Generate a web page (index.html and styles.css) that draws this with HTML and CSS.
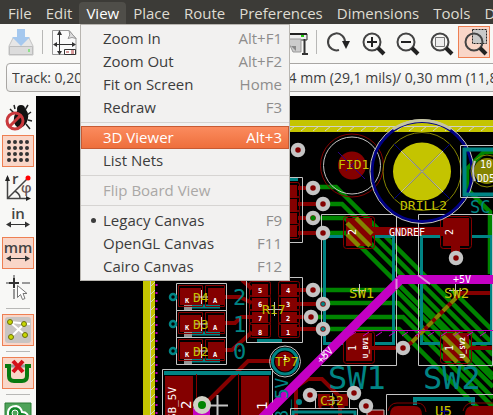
FILE: index.html
```html
<!DOCTYPE html>
<html lang="en">
<head>
<meta charset="utf-8">
<title>Pcbnew</title>
<link rel="stylesheet" href="styles.css">
</head>
<body>
<nav class="menubar">
  <button>File</button><button>Edit</button><button class="open">View</button><button>Place</button><button>Route</button><button>Preferences</button><button>Dimensions</button><button>Tools</button><button>Design</button>
</nav>

<div class="menu" role="menu">
  <button role="menuitem"><span>Zoom In</span><kbd>Alt+F1</kbd></button>
  <button role="menuitem"><span>Zoom Out</span><kbd>Alt+F2</kbd></button>
  <button role="menuitem"><span>Fit on Screen</span><kbd>Home</kbd></button>
  <button role="menuitem"><span>Redraw</span><kbd>F3</kbd></button>
  <hr>
  <button role="menuitem" class="active"><span>3D Viewer</span><kbd>Alt+3</kbd></button>
  <button role="menuitem"><span>List Nets</span></button>
  <hr>
  <button role="menuitem" disabled><span>Flip Board View</span></button>
  <hr>
  <button role="menuitem" class="checked"><span>Legacy Canvas</span><kbd>F9</kbd></button>
  <button role="menuitem"><span>OpenGL Canvas</span><kbd>F11</kbd></button>
  <button role="menuitem"><span>Cairo Canvas</span><kbd>F12</kbd></button>
</div>

<div class="toolbar">
  <div class="group">
    <button class="tool" aria-label="Save"><svg viewBox="0 0 32 32"><path d="M8 12h16l4 8v9H4v-9z" fill="#e6e6e6" stroke="#c4c4c4"/><path d="M4.500 20.500h23v8h-23z" fill="#dcdcdc" stroke="#bdbdbd"/><path d="M12 3h8v8h5l-9 9-9-9h5z" fill="#a5c8ee"/><path d="M23 23h2v3h-2z" fill="#8fe08a"/></svg></button>
    <i class="vsep"></i>
    <button class="tool" aria-label="Page settings"><svg viewBox="0 0 32 32"><path d="M4.500 4.500H21l7 8v16H4.500z" fill="#fafafa" stroke="#999"/><path d="M21 4.500q2 5-1 8 4-2 8 0z" fill="#ddd" stroke="#999"/><path d="M11.500 7v20M7 18.500h19" stroke="#333" fill="none"/><path d="M11.500 4l-2.500 5h5zM11.500 29l-2.500-4h5zM5 18.500l4-2.500v5zM28 18.500l-4-2.500v5z" fill="#333"/><path d="M16.500 23.500h11v5h-11z" fill="#fff" stroke="#333"/><path d="M18 26h3M23 25h3M23 27h3" stroke="#a33"/></svg></button>
  </div>
  <div class="group">
    <button class="tool" aria-label="Plot"><svg viewBox="0 0 32 32"><path d="M4 8h24v6H4z" fill="#eee" stroke="#333"/><path d="M4 8h24" stroke="#222" stroke-width="2"/><path d="M22 9h3v2h-3z" fill="#2c1"/><path d="M8 13h14v13H14z" fill="#ccc" stroke="#999"/><path d="M12 20h5v5z" fill="#888"/><path d="M25.500 13v14M23 28h6" stroke="#333" stroke-width="2"/></svg></button>
    <i class="vsep"></i>
    <button class="tool" aria-label="Refresh"><svg viewBox="0 0 32 32"><path d="M17 24A8.500 8.500 0 1 1 23 16" fill="none" stroke="#444" stroke-width="2"/><path d="M20 15h8l-4 8z" fill="#222"/></svg></button>
    <button class="tool" aria-label="Zoom in"><svg viewBox="0 0 32 32"><circle cx="16" cy="16" r="8.500" fill="none" stroke="#444" stroke-width="2"/><path d="M22 22l6 6" stroke="#222" stroke-width="4"/><path d="M11 16h10M16 11v10" stroke="#222" stroke-width="2"/></svg></button>
    <button class="tool" aria-label="Zoom out"><svg viewBox="0 0 32 32"><circle cx="16" cy="16" r="8.500" fill="none" stroke="#444" stroke-width="2"/><path d="M22 22l6 6" stroke="#222" stroke-width="4"/><path d="M11 16h10" stroke="#222" stroke-width="2"/></svg></button>
    <button class="tool" aria-label="Zoom to fit"><svg viewBox="0 0 32 32"><circle cx="16" cy="16" r="8.500" fill="none" stroke="#444" stroke-width="2"/><path d="M22 22l6 6" stroke="#222" stroke-width="4"/><path d="M11.500 11.500h9v9h-9z" fill="#eee" stroke="#777"/></svg></button>
    <button class="tool on" aria-label="Zoom to selection"><svg viewBox="0 0 32 32"><path d="M14.500 3.500h14v14h-14z" fill="#c9c9c9" stroke="#222" stroke-dasharray="2 1"/><circle cx="16" cy="16" r="8.500" fill="none" stroke="#444" stroke-width="2"/><path d="M22 22l6 6" stroke="#222" stroke-width="4"/></svg></button>
  </div>
</div>

<div class="sizes">
  <select class="track" aria-label="Track width"><option>Track: 0,200 mm (7,9 mils)</option></select>
  <select class="via" aria-label="Via size"><option>Via: 0,74 mm (29,1 mils)/ 0,30 mm (11,8 mils)</option></select>
</div>

<main class="work">
  <aside class="side">
    <button class="tool" aria-label="DRC off"><svg viewBox="0 0 32 32"><path d="M13 8l-1-4M23 9l3-5M25 14l4-3M26 19l4 1M24 23l4 5M12 12l-4-4" stroke="#222" stroke-width="1.500" fill="none"/><ellipse cx="19" cy="17" rx="7" ry="10" fill="#111" transform="rotate(15 19 17)"/><circle cx="19" cy="8" r="4" fill="#111"/><circle cx="13" cy="20" r="8" fill="none" stroke="#c9383c" stroke-width="3"/><path d="M7.500 25.500l11-11" stroke="#c9383c" stroke-width="3"/></svg></button>
    <button class="tool on" aria-label="Grid"><svg viewBox="0 0 32 32"><path d="M7 7h19M7 13h19M7 19h19M7 25h19" stroke="#333" stroke-width="4" stroke-linecap="round" stroke-dasharray="0 6"/></svg></button>
    <button class="tool" aria-label="Polar coordinates"><svg viewBox="0 0 32 32"><path d="M5.500 8v21.500H26M5.500 29.500L26 9M13 22q5 3 5 7" fill="none" stroke="#444" stroke-width="1.500"/><path d="M5.500 6L3 12h5zM29 29.500L24 27v5z" fill="#222"/><circle cx="26" cy="9" r="2.500" fill="#f00"/><text x="10" y="15" class="glyph">r</text><text x="19" y="24" class="glyph phi">φ</text></svg></button>
    <button class="tool" aria-label="Inches"><svg viewBox="0 0 32 32"><text x="16" y="16" text-anchor="middle" class="glyph unit">in</text><path d="M8 21.500h18" stroke="#333"/><path d="M4 21.500l5-3v6zM28 21.500l-5-3v6z" fill="#333"/></svg></button>
    <button class="tool on" aria-label="Millimetres"><svg viewBox="0 0 32 32"><text x="16" y="16" text-anchor="middle" class="glyph unit">mm</text><path d="M8 21.500h18" stroke="#333"/><path d="M4 21.500l5-3v6zM28 21.500l-5-3v6z" fill="#333"/></svg></button>
    <button class="tool" aria-label="Cursor shape"><svg viewBox="0 0 32 32"><path d="M4 12h4M20 12h8M12 4v3M12 18v10" stroke="#999" stroke-width="2"/><path d="M7 12h10M12 7v10" stroke="#333" stroke-width="2"/><path d="M15.500 14.500v12l3-3 2 5 2.500-1-2-5h4z" fill="#fff" stroke="#777"/></svg></button>
    <hr>
    <button class="tool on" aria-label="Ratsnest"><svg viewBox="0 0 32 32"><rect x="3" y="3" width="26" height="26" rx="3" fill="#c8c4c2"/><path d="M8 8l15 13M9 23L22 10M8 8l20 2" stroke="#fff" stroke-width="2"/><g fill="#c8d800" stroke="#6b6f10"><circle cx="8" cy="8" r="2.500"/><circle cx="22" cy="10" r="2.500"/><circle cx="9" cy="23" r="2.500"/><circle cx="23" cy="21" r="2.500"/></g></svg></button>
    <hr>
    <button class="tool on" aria-label="Auto delete track"><svg viewBox="0 0 32 32"><path d="M4 9h24" stroke="#999" stroke-width="3"/><path d="M3 9h4v10q0 5 5 5h8q5 0 5-5V9h4" fill="none" stroke="#087a10" stroke-width="4"/><path d="M11 4l10 11M21 4L11 15" stroke="#d4101a" stroke-width="4"/></svg></button>
    <hr>
    <button class="tool" aria-label="Show zones"><svg viewBox="0 0 32 32"><path d="M3 3h26v26H3z" fill="#4fa35a" stroke="#2a7d35"/><path d="M6 29V12q1-6 8-6 5 1 6 6 7 0 6 8v9" fill="#118528" stroke="#fff" stroke-width="2"/><circle cx="13" cy="13" r="3" fill="#4fa35a" stroke="#fff"/></svg></button>
  </aside>

  <svg class="board" viewBox="36 96 457 319" preserveAspectRatio="xMinYMin slice" role="img" aria-label="Board">
    <defs>
      <pattern id="hatch" width="12" height="6" patternUnits="userSpaceOnUse" y="126"><path d="M1 5l6-5" stroke="#d6d6c0"/></pattern>
      <pattern id="hatchv" width="5" height="8" patternUnits="userSpaceOnUse" x="150"><path d="M0 7l5-5" stroke="#d6d6c0"/></pattern>
      <g id="via"><circle r="5" fill="#840000" stroke="#c4c4c4" stroke-width="4.500"/></g>
      <g id="led"><path d="M184 304.500h36v4h-36z" fill="#008484"/><path d="M184 304h8v7h-8z" fill="#949494"/><path d="M176.500 283.500h50v27h-50z" fill="none" stroke="#c4c4c4"/><path d="M180 288h21v17h-21zM208 288h16v17h-16z" fill="#840000"/><path d="M178.500 285.500h24v21h-24zM205.500 285.500h19v21h-19z" fill="none" stroke="#840000"/><circle cx="173" cy="297" r="3" fill="none" stroke="#008484" stroke-width="2.500"/><path d="M201.500 290v14M195 297h13" stroke="#d6d6d6"/></g>
      <g id="swpad"><path d="M346 218h26v28h-26z" fill="#840000"/><rect x="343.500" y="216.500" width="31" height="32" rx="3" fill="none" stroke="#840000"/></g>
      <g id="rpad"><path d="M252 284h16v11h-16z" fill="#840000"/><rect x="249.500" y="281.500" width="21" height="15" rx="2" fill="none" stroke="#840000"/></g>
      <g id="rcol"><use href="#rpad"/><use href="#rpad" y="14"/><use href="#rpad" y="28"/><use href="#rpad" y="41"/></g>
    </defs>

    <path d="M36 96h457v319H36z"/>
    <!-- board edge -->
    <path d="M143 120h350v12H155v283h-12z" fill="#c4c400"/>
    <path d="M155 126h338v6H155z" fill="url(#hatch)"/><path d="M150 132h5v283h-5z" fill="url(#hatchv)"/>
    <path d="M493 126.500H150.500V415" fill="none" stroke="#d0d0c8"/>
    <path d="M156.500 284v131" stroke="#c400c4" stroke-width="2" stroke-dasharray="2 6"/>

    <!-- back copper -->
    <g fill="none" stroke="#008400" stroke-width="4.500">
      <path d="M313 187h23l157 157"/><path d="M323 204h19l151 151"/><path d="M313 218h32l148 148"/><path d="M323 233h24l146 146"/>
      <path d="M313 290h83l97 97"/><path d="M323 303h75l95 95"/><path d="M311 317h92l90 90"/><path d="M323 329h76l86 86"/>
      <path d="M418 300l75 75"/><path d="M452 290l41 41"/>
      <path d="M493 152h-9l-17 17v20l23 23v62"/>
    </g>

    <!-- front copper -->
    <g fill="none" stroke="#840000" stroke-width="4">
      <path d="M298 188h15M298 204h25M298 218h13M298 233h25M296 290h17M296 304h27M296 317h15M296 329h27"/>
      <path d="M224 297h16l12 6M224 323h11l6-6h11M224 350h8l20-18M204 405l44-44h24M242 280l10 9"/>
      <path d="M372 348h31l8-5 50-50h32M469 348h24"/>
      <path d="M296 415v-28l12-8h14l18 18v18" /><path d="M320 397v12M332 397v12M343 397v12" stroke-width="3"/>
    </g>
    <path d="M372 227h71v9h-71zM451 246h9v12h-9z" fill="#840000"/>

    <!-- R17 and its neighbour -->
    <path d="M246.500 277.500h56v65h-56zM246.500 177.500h56v65h-56z" fill="none" stroke="#c4c4c4"/>
    <use href="#rcol"/><use href="#rcol" x="29"/><use href="#rcol" x="29" y="-99"/>
    <path d="M257 339h25v3h-25zM285 178h13v3h-13z" fill="#008484"/>
    <g class="ref white tiny"><text x="258" y="293">5</text><text x="258" y="307">6</text><text x="258" y="321">7</text><text x="258" y="335">8</text><text x="286" y="293">4</text><text x="286" y="307">3</text><text x="286" y="321">2</text><text x="286" y="335">1</text></g>
    <path d="M274.500 302v14M268 309.500h14" stroke="#c4c4c4"/><text x="262" y="314" class="ref yellow label">R17</text>

    <!-- LEDs -->
    <use href="#led"/><use href="#led" y="27"/><use href="#led" y="54"/>
    <g class="ref yellow label"><text x="193" y="302">D4</text><text x="193" y="329">D3</text><text x="193" y="356">D2</text></g>
    <g class="ref white tiny"><text x="185" y="303">K</text><text x="213" y="303">A</text><text x="185" y="330">K</text><text x="213" y="330">A</text><text x="185" y="357">K</text><text x="213" y="357">A</text></g>
    <g class="ref teal big"><text x="233" y="305">2</text><text x="233" y="332">1</text><text x="233" y="359">0</text></g>

    <!-- switches -->
    <g fill="none" stroke="#008484" stroke-width="3"><path d="M344 236.500h-19.500v107H344M374 236.500h19.500v107H374M440 236.500h-18.500v107H440M472 236.500h19.500v107H472"/></g>
    <path d="M321.500 214.500h75v151h-75zM418.500 214.500h74v151h-74z" fill="none" stroke="#c4c4c4"/>
    <use href="#swpad"/><use href="#swpad" x="97"/><use href="#swpad" y="115"/><use href="#swpad" x="97" y="115"/>
    <g stroke="#848400" stroke-width="4.500"><path d="M347 223l23 23M356 218l16 16M347 234l12 12M443 336l26 26M454 333l15 15M443 348l14 14"/><path d="M412 342l46-46" stroke-width="4" stroke-dasharray="7 4"/></g>
    <text x="389" y="236" class="ref white mid">GNDREF</text>
    <g class="ref white mid"><text transform="translate(356 235) rotate(-90)">2</text><text transform="translate(453 235) rotate(-90)">2</text><text transform="translate(356 351) rotate(-90)">1</text><text transform="translate(453 351) rotate(-90)">1</text></g>
    <g class="ref white tiny"><text transform="translate(368 358) rotate(-90)">U_BV1</text><text transform="translate(465 358) rotate(-90)">U_SV2</text></g>

    <!-- +5V rail -->
    <path d="M493 279.500h-92.500L255 425" fill="none" stroke="#c400c4" stroke-width="9"/>
    <path d="M396.500 279v10M324 350v10M418 275l12 9" stroke="#d98cd9" stroke-width="2"/>
    <path d="M344 330.500h149" stroke="#c400c4"/><path d="M350 336l6-4m7 4l6-4m7 4l6-4m7 4l6-4m7 4l6-4m7 4l6-4m7 4l6-4m7 4l6-4m7 4l6-4m7 4l6-4m7 4l6-4" stroke="#c400c4"/>
    <text x="453" y="283" class="ref white mid">+5V</text><text transform="translate(321 364) rotate(-45)" class="ref white mid">+5V</text>

    <path d="M359.500 284v12M353 290.500h13M455.500 284v12M449 290.500h13" stroke="#c4c4c4"/>
    <g class="ref yellow"><text x="349" y="298">SW1</text><text x="444" y="298">SW2</text></g>
    <g class="ref teal title"><text x="328" y="389">SW1</text><text x="423" y="389">SW2</text></g>

    <!-- fiducial and drill -->
    <circle cx="352" cy="165.500" r="14" fill="#840000"/><circle cx="352" cy="165.500" r="31.500" fill="none" stroke="#840000"/><circle cx="352" cy="165.500" r="28.500" fill="none" stroke="#c4c4c4"/>
    <path d="M338 152l27 27M346 171l12-12" stroke="#2a0084"/><text x="338" y="169" class="ref yellow label">FID1</text>
    <circle cx="422" cy="171.500" r="50" fill="none" stroke="#000084" stroke-width="3"/><circle cx="422" cy="171.500" r="52" fill="none" stroke="#c4c4c4"/><path d="M393 129q29-17 58 0" fill="none" stroke="#c4c4a0" stroke-width="3"/>
    <circle cx="422" cy="171.500" r="39" fill="none" stroke="#848400"/><circle cx="422" cy="171.500" r="29" fill="#c4c400"/><path d="M394 144l56 55M394 199l56-55" stroke="#000084"/><path d="M401 151l42 41M401 192l42-41" stroke="#d0d0a0"/><text x="400" y="210" class="ref yellow label">DRILL2</text>

    <!-- connector -->
    <path d="M493 145.500h-32.500v52H493" fill="none" stroke="#c4c4c4"/><path d="M493 149.500h-28.500v45H493" fill="none" stroke="#008484" stroke-width="4"/>
    <circle cx="487" cy="171" r="13" fill="#848400"/><circle cx="487" cy="171" r="16" fill="none" stroke="#848400"/><path d="M475 161q-4 10 0 20" stroke="#c4c4c4" stroke-width="2" fill="none"/>
    <g class="ref white mid"><text x="480" y="168">10</text><text x="477" y="182">DD5</text></g><text x="470" y="213" class="ref teal sc">SC</text>

    <!-- TP7 and power connector -->
    <circle cx="285" cy="361.500" r="10" fill="#840000"/><circle cx="285" cy="361.500" r="12.500" fill="none" stroke="#008484" stroke-width="3"/><circle cx="285" cy="361.500" r="15.500" fill="none" stroke="#c4c4c4"/>
    <text transform="translate(288 421) rotate(-90)" class="ref teal net">B_5V</text>
    <text x="275" y="366" class="ref yellow label">TP7</text><text x="283" y="360" class="ref white tiny">1</text>
    <path d="M162.500 415v-45.500h110V415" fill="none" stroke="#c4c4c4"/><path d="M164 371h107v4H164z" fill="#008484"/>
    <path d="M165 376h28v39h-28zM241 376h28v39h-28z" fill="#840000"/><path d="M196.500 415v-41M238.500 415v-41" stroke="#840000"/>
    <path d="M255 425l20-20" stroke="#c400c4" stroke-width="9"/>
    <path d="M193 408h17v7h-17z" fill="#c400c4"/>
    <path d="M217.500 395v20M207 405.500h21" stroke="#c4c4c4" stroke-width="2"/><circle cx="202" cy="405" r="6.500" fill="#008400" stroke="#d0d0c4" stroke-width="5"/>
    <g class="ref white"><text transform="translate(176 420) rotate(-90)" class="pin">SB_5V</text><text transform="translate(191 409) rotate(-90)">2</text><text transform="translate(267 410) rotate(-90)">1</text></g>

    <!-- C32 -->
    <path d="M315.500 391.500h34v17h-34z" fill="none" stroke="#c4c4c4"/><path d="M318 394h12v12h-12zM337 394h11v12h-11z" fill="#840000"/><path d="M290.500 415v-6.500h67v6.500" fill="none" stroke="#c4c4c4"/><path d="M293 415v-3h62v3" fill="none" stroke="#008484" stroke-width="3"/>
    <path d="M332.500 393v13M327 400.500h12" stroke="#949494"/><circle cx="299" cy="402" r="3" fill="#008484"/><text x="320" y="405" class="ref yellow label">C32</text>
    <path d="M367 415v-5h17v5" fill="#840000" stroke="#c4c4c4"/>

    <!-- U5 -->
    <path d="M386.500 415v-20.500H493" fill="none" stroke="#c4c4c4"/><path d="M415 405v-6h58v6" fill="none" stroke="#008484" stroke-width="4"/>
    <path d="M390 415q0-9 8-9h16q8 0 8 9zM465 415q0-9 8-9h20v9z" fill="#840000"/><path d="M388 411q2-8 9-8h20q8 0 9 9M463 411q2-8 9-8h21" fill="none" stroke="#840000"/>
    <text x="435" y="416" class="ref yellow">U5</text><path d="M444.500 407v8M440 411.500h9" stroke="#000084"/>

    <use href="#via" x="298" y="150"/><use href="#via" x="313" y="188"/><use href="#via" x="323" y="204"/><use href="#via" x="313" y="218"/><use href="#via" x="323" y="233"/><use href="#via" x="313" y="290"/><use href="#via" x="323" y="304"/><use href="#via" x="311" y="317"/><use href="#via" x="323" y="329"/><use href="#via" x="403" y="348"/><use href="#via" x="456" y="258"/><use href="#via" x="310" y="395"/><use href="#via" x="354" y="393"/><use href="#via" x="366" y="406"/>
    <g fill="#008400"><circle cx="313" cy="218" r="2.500"/></g><g fill="#008484"><circle cx="323" cy="304" r="2"/><circle cx="323" cy="329" r="2"/></g>
  </svg>
</main>
</body>
</html>
```

FILE: styles.css
```css
* { box-sizing: border-box; }
body {
  margin: 0;
  height: 100vh;
  overflow: hidden;
  display: flex;
  flex-direction: column;
  background: #f8f8f6;
  color: #3c3c3c;
  font: 15px/23px "Open Sans", "Noto Sans", sans-serif;
}
button, select { font: inherit; color: inherit; border: 0; background: none; padding: 0; margin: 0; }
hr { margin: 0; border: 0; }

.menubar {
  flex: none;
  height: 24px;
  padding: 2px 0 0 1px;
  display: flex;
  overflow: hidden;
  background: #3c3b37;
  color: #dfdbd2;
}
.menubar button { flex: none; padding: 0 7px; height: 22px; line-height: 22px; }
.menubar .open { background: #4f4e49; border-radius: 4px 4px 0 0; color: #fff; }

.menu {
  position: absolute;
  z-index: 2;
  left: 80px;
  top: 24px;
  width: 210px;
  padding: 2px 0;
  display: flex;
  flex-direction: column;
  background: #f2f1f0;
  border: 1px solid #b8b5b0;
}
.menu button {
  display: flex;
  justify-content: space-between;
  height: 23px;
  padding: 0 7px 0 22px;
  line-height: 23px;
}
.menu kbd { font: inherit; color: #8e8d8c; }
.menu hr { height: 7px; padding: 3px 0; background: #d6d4d2 content-box; }
.menu button:disabled { color: #aaa8a6; }
.menu .active {
  color: #fff;
  background: linear-gradient(#fb8b5e, #ee6f3c);
  border: 1px solid #c65a33;
  padding: 0 6px 0 21px;
  line-height: 21px;
}
.menu .active kbd { color: #fff; }
.menu .checked { padding-left: 10px; }
.menu .checked::before { content: ""; width: 5px; height: 5px; margin: 9px 7px 0 0; border-radius: 50%; background: #3c3c3c; }
.menu .checked span { margin-right: auto; }

.toolbar {
  flex: none;
  display: flex;
  justify-content: space-between;
  padding: 2px 3px 2px 5px;
}
.group { display: flex; gap: 2px; }
.tool { display: block; flex: none; width: 32px; height: 32px; border: 1px solid transparent; }
.tool svg { display: block; width: 32px; height: 32px; margin: -1px; }
.tool.on { background: #f9d6c8; border-color: #ee7f52; }
.vsep { width: 1px; height: 24px; margin: 4px 3px; background: #b8b8b6; }

.sizes {
  flex: none;
  display: flex;
  gap: 8px;
  height: 36px;
  padding: 3px 0 4px 6px;
  margin-right: -20px;
}
.sizes select {
  appearance: none;
  height: 29px;
  border: 1px solid #a9a7a4;
  border-radius: 4px;
  background: linear-gradient(#fdfdfd, #ececea);
  padding: 0 5px;
  font-size: 14px;
}
.track { flex: none; width: 222px; }
.via { flex: 1; min-width: 0; }

.work { flex: 1; min-height: 0; display: flex; }
.side {
  flex: none;
  width: 36px;
  padding: 5px 2px 0;
  display: flex;
  flex-direction: column;
  gap: 2px;
  overflow: hidden;
}
.side hr { flex: none; height: 7px; margin: 0 4px; padding: 3px 0; background: #b8b8b6 content-box; }
.board { flex: 1; min-width: 0; height: 100%; display: block; background: #000; }

.glyph { font: 600 15px "Open Sans", sans-serif; fill: #444; }
.phi { font-size: 14px; fill: #655; }
.unit { font-size: 15px; }

.ref { font-family: "DejaVu Sans Mono", monospace; font-size: 14px; }
.white { fill: #fff; }
.yellow { fill: #c4c400; }
.teal { fill: #008484; }
.tiny { font-size: 7px; font-weight: bold; }
.mid { font-size: 10px; }
.pin { font-size: 11px; }
.label { font-size: 13px; }
.big { font-size: 22px; }
.title { font-size: 32px; }
.sc { font-size: 17px; }
.net { font-size: 18px; }
```
